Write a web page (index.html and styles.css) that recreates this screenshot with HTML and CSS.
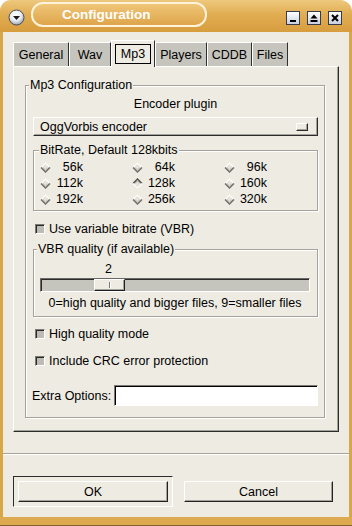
FILE: index.html
```html
<!DOCTYPE html>
<html>
<head>
<meta charset="utf-8">
<title>Configuration</title>
<link rel="stylesheet" href="styles.css">
</head>
<body>
<svg class="defs" aria-hidden="true">
  <defs>
    <symbol id="radio-off" viewBox="0 0 11 11">
      <path d="M1 5.5 L5.5 1 L10 5.5 L5.5 10 Z" fill="#e4e2da"/>
      <path d="M1 5.5 L5.5 1 L10 5.5" fill="none" stroke="#fdfdfb" stroke-width="1.2"/>
      <path d="M1 5.5 L5.5 10 L10 5.5" fill="none" stroke="#6e6d68" stroke-width="1.4"/>
      <path d="M2.8 5.5 L5.5 8.2 L8.2 5.5" fill="none" stroke="#b0afa7" stroke-width="1"/>
    </symbol>
    <symbol id="radio-on" viewBox="0 0 11 11">
      <path d="M1 5.5 L5.5 1 L10 5.5 L5.5 10 Z" fill="#e4e2da"/>
      <path d="M1 5.5 L5.5 1 L10 5.5" fill="none" stroke="#4f4e49" stroke-width="1.4"/>
      <path d="M2.8 5.5 L5.5 2.8 L8.2 5.5" fill="none" stroke="#9a9991" stroke-width="1"/>
      <path d="M1 5.5 L5.5 10 L10 5.5" fill="none" stroke="#fdfdfb" stroke-width="1.2"/>
    </symbol>
  </defs>
</svg>
<div class="window">
  <div class="titlebar">
    <div class="menu-btn">
      <svg width="17" height="17" viewBox="0 0 17 17">
        <defs>
          <radialGradient id="sphere" cx="45%" cy="35%" r="65%">
            <stop offset="0" stop-color="#ffffff"/>
            <stop offset="0.55" stop-color="#e9ecf1"/>
            <stop offset="1" stop-color="#9aa2b1"/>
          </radialGradient>
        </defs>
        <circle cx="8.5" cy="8.5" r="7.5" fill="url(#sphere)" stroke="#4a5060" stroke-width="1"/>
        <path d="M5 7 L12 7 L8.5 11 Z" fill="#1a1a1a"/>
      </svg>
    </div>
    <div class="title-pill">Configuration</div>
    <div class="wbtns">
      <div class="wbtn"><svg width="10" height="10" viewBox="0 0 10 10"><rect x="2" y="7" width="6" height="2" fill="#000"/></svg></div>
      <div class="wbtn"><svg width="10" height="10" viewBox="0 0 10 10"><path d="M5 1.5 L8.5 5.5 L1.5 5.5 Z" fill="#000"/><rect x="1.5" y="7" width="7" height="2" fill="#000"/></svg></div>
      <div class="wbtn"><svg width="10" height="10" viewBox="0 0 10 10"><path d="M2 2 L8 8 M8 2 L2 8" stroke="#000" stroke-width="2"/></svg></div>
    </div>
  </div>

  <div class="client">
    <div class="notebook">
      <div class="tabs">
        <div class="tab w-general">General</div>
        <div class="tab w-wav">Wav</div>
        <div class="tab w-mp3 active"><span class="focus">Mp3</span></div>
        <div class="tab w-players">Players</div>
        <div class="tab w-cddb">CDDB</div>
        <div class="tab w-files">Files</div>
      </div>
      <div class="page">
        <fieldset class="frame frame-main">
          <legend>Mp3 Configuration</legend>
          <div class="enc-label">Encoder plugin</div>
          <div class="optmenu"><span>OggVorbis encoder</span><span class="opt-ind"></span></div>

          <fieldset class="frame frame-bitrate">
            <legend>BitRate, Default 128kbits</legend>
            <div class="radios">
              <div class="radio"><svg><use href="#radio-off"/></svg><span class="val">56k</span></div>
              <div class="radio"><svg><use href="#radio-off"/></svg><span class="val">64k</span></div>
              <div class="radio"><svg><use href="#radio-off"/></svg><span class="val">96k</span></div>
              <div class="radio"><svg><use href="#radio-off"/></svg><span class="val">112k</span></div>
              <div class="radio"><svg><use href="#radio-on"/></svg><span class="val">128k</span></div>
              <div class="radio"><svg><use href="#radio-off"/></svg><span class="val">160k</span></div>
              <div class="radio"><svg><use href="#radio-off"/></svg><span class="val">192k</span></div>
              <div class="radio"><svg><use href="#radio-off"/></svg><span class="val">256k</span></div>
              <div class="radio"><svg><use href="#radio-off"/></svg><span class="val">320k</span></div>
            </div>
          </fieldset>

          <div class="check check-vbr"><span class="box"></span><span>Use variable bitrate (VBR)</span></div>

          <fieldset class="frame frame-vbr">
            <legend>VBR quality (if available)</legend>
            <div class="slider-value" style="margin-left:53px">2</div>
            <div class="trough"><div class="handle" style="margin-left:53px"><span class="grip"></span></div></div>
            <div class="desc">0=high quality and bigger files, 9=smaller files</div>
          </fieldset>

          <div class="check check-hq"><span class="box"></span><span>High quality mode</span></div>
          <div class="check check-crc"><span class="box"></span><span>Include CRC error protection</span></div>

          <div class="extra"><span>Extra Options:</span><span class="entry"></span></div>
        </fieldset>
      </div>
    </div>

    <div class="separator"></div>

    <div class="actions">
      <div class="default-frame"><div class="btn btn-ok">OK</div></div>
      <div class="btn btn-cancel">Cancel</div>
    </div>
  </div>
  <div class="bottombar"></div>
</div>
</body>
</html>
```

FILE: styles.css
```css
* { box-sizing: border-box; }
html, body { margin: 0; padding: 0; }
body {
  width: 352px;
  height: 526px;
  background: #ffffff;
  font-family: "Liberation Sans", Arial, sans-serif;
  font-size: 12.5px;
  color: #000;
  overflow: hidden;
}
.defs { position: absolute; width: 0; height: 0; overflow: hidden; }

.window {
  width: 352px;
  height: 526px;
  display: flex;
  flex-direction: column;
  border-radius: 11px 12px 0 0;
  overflow: hidden;
  background: #eeebe3;
}

/* title bar */
.titlebar {
  height: 32px;
  flex: none;
  display: flex;
  align-items: flex-start;
  padding: 0 10px 0 8px;
  background: linear-gradient(#eec87e, #e1ad52 45%, #d79d3e);
}
.menu-btn { margin-top: 9px; width: 17px; height: 17px; }
.menu-btn svg { display: block; }
.title-pill {
  margin-top: 2px;
  margin-left: 6px;
  width: 176px;
  height: 25px;
  border: 2px solid #fff3dc;
  border-radius: 12px;
  background: linear-gradient(#efc678, #dea54a);
  color: #fff;
  font-weight: bold;
  font-size: 13.5px;
  line-height: 21px;
  padding-left: 29px;
}
.wbtns { margin-left: auto; margin-top: 11px; display: flex; gap: 7px; }
.wbtn {
  width: 14px;
  height: 14px;
  border: 1px solid #363c4a;
  background: linear-gradient(#ffffff, #c9d1e2);
  display: flex;
  align-items: center;
  justify-content: center;
}
.wbtn svg { display: block; }

/* client */
.client {
  flex: 1;
  display: flex;
  flex-direction: column;
  border-left: 3px solid #d8a547;
  border-right: 3px solid #d8a547;
}
.bottombar {
  height: 9px;
  flex: none;
  background: #ddaa50;
  border-bottom: 1px solid #7d6230;
}

/* notebook */
.notebook { margin: 8px 10px 0; }
.tabs { display: flex; align-items: flex-end; height: 26px; }
.tab {
  height: 24px;
  background: #c6c5bd;
  border-top: 1px solid #fff;
  border-left: 1px solid #fff;
  border-right: 1px solid #2f2f2f;
  display: flex;
  align-items: center;
  justify-content: center;
}
.tab.active {
  height: 27px;
  margin-bottom: -1px;
  background: #eeebe3;
  position: relative;
  z-index: 1;
}
.focus { border: 1px solid #000; padding: 0 5px; height: 20px; line-height: 18px; }
.w-general { width: 56px; }
.w-wav { width: 42px; }
.w-mp3 { width: 44px; }
.w-players { width: 52px; }
.w-cddb { width: 45px; }
.w-files { width: 36px; }

.page {
  height: 366px;
  border: 1px solid;
  border-color: #fff #2c2c2c #2c2c2c #fff;
  box-shadow: inset -1px -1px 0 #a3a29a;
  padding: 11px 13px 13px 11px;
}

/* frames */
.frame {
  margin: 0;
  min-width: 0;
  border: 1px solid #a4a29a;
  box-shadow: inset 1px 1px 0 #fff, 1px 1px 0 #fff;
}
.frame > legend {
  padding: 0 1px;
  line-height: 15px;
  background: #eeebe3;
}
.frame-main { padding: 3px 6px 11px 7px; }
.frame-main > legend { margin-left: -4px; }

.enc-label { text-align: center; line-height: 16px; }
.optmenu {
  margin-top: 5px;
  height: 19px;
  border: 1px solid;
  border-color: #fff #2b2b2b #2b2b2b #fff;
  box-shadow: inset -1px -1px 0 #a3a29a;
  display: flex;
  align-items: center;
  justify-content: space-between;
  padding: 0 9px 0 6px;
}
.opt-ind {
  width: 12px;
  height: 8px;
  border: 1px solid;
  border-color: #fff #2b2b2b #2b2b2b #fff;
  box-shadow: inset -1px -1px 0 #a3a29a;
}

.frame-bitrate { margin-top: 7px; padding: 1px 6px 3px 6px; }
.frame-bitrate > legend { margin-left: -1px; }
.radios { display: grid; grid-template-columns: repeat(3, 92px); grid-auto-rows: 16px; }
.radio { display: flex; align-items: center; }
.radio svg { width: 11px; height: 11px; display: block; }
.val { width: 32px; text-align: right; }

.check { display: flex; align-items: center; height: 16px; padding-left: 2px; gap: 4px; }
.box {
  width: 10px;
  height: 10px;
  border: 1px solid;
  border-color: #7b7a74 #fff #fff #7b7a74;
  box-shadow: inset 1px 1px 0 #2a2a2a;
  background: #bdbcb4;
}
.check-vbr { margin-top: 10px; }
.check-hq { margin-top: 9px; }
.check-crc { margin-top: 11px; }

.frame-vbr { margin-top: 5px; padding: 4px 7px 5px 6px; }
.frame-vbr > legend { margin-left: -3px; }
.slider-value { width: 31px; text-align: center; line-height: 16px; }
.trough {
  margin-top: 1px;
  height: 14px;
  border: 1px solid;
  border-color: #6a6963 #fff #fff #6a6963;
  box-shadow: inset 1px 1px 0 #2b2b2b;
  background: #c6c5bd;
}
.handle {
  width: 31px;
  height: 12px;
  border: 1px solid;
  border-color: #fff #1f1f1f #1f1f1f #fff;
  box-shadow: inset -1px -1px 0 #a3a29a;
  background: #eeebe3;
  display: flex;
  justify-content: center;
  align-items: center;
}
.grip { width: 2px; height: 6px; border-left: 1px solid #7b7a74; border-right: 1px solid #fff; }
.desc { margin-top: 3px; text-align: center; line-height: 16px; }

.extra { margin-top: 16px; margin-left: -1px; display: flex; align-items: center; gap: 3px; height: 21px; }
.entry {
  flex: 1;
  height: 21px;
  background: #fff;
  border: 1px solid;
  border-color: #7b7a74 #fff #fff #7b7a74;
  box-shadow: inset 1px 1px 0 #000;
}

/* bottom */
.separator { margin-top: 21px; height: 2px; border-top: 1px solid #a4a29a; border-bottom: 1px solid #fff; }
.actions { margin-top: 21px; display: flex; align-items: flex-start; padding-left: 10px; gap: 11px; }
.default-frame {
  width: 160px;
  height: 31px;
  border: 1px solid;
  border-color: #2b2b2b #fff #fff #2b2b2b;
  padding: 4px;
}
.btn {
  height: 21px;
  border: 1px solid;
  border-color: #fff #222 #222 #fff;
  box-shadow: inset -1px -1px 0 #a3a29a;
  background: #eeebe3;
  display: flex;
  align-items: center;
  justify-content: center;
}
.btn-ok { width: 100%; }
.btn-cancel { width: 149px; margin-top: 5px; }
```
